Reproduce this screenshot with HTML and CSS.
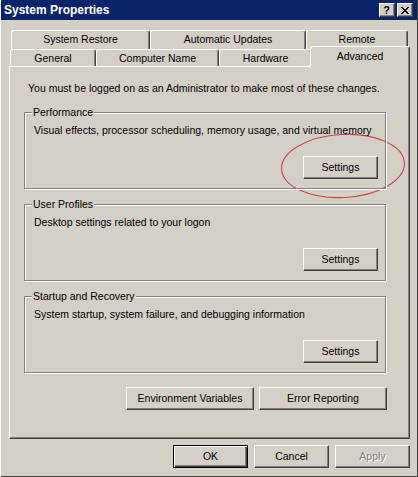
FILE: index.html
```html
<!DOCTYPE html>
<html>
<head>
<meta charset="utf-8">
<title>System Properties</title>
<link rel="stylesheet" href="styles.css">
</head>
<body>
<div class="window">
  <div class="titlebar">
    <span class="title">System Properties</span>
    <div class="caption-btns">
      <span class="cbtn help">?</span>
      <span class="cbtn close">
        <svg width="8" height="7" viewBox="0 0 8 7" shape-rendering="crispEdges">
          <path d="M0 0h2v1h-2zM6 0h2v1h-2zM1 1h2v1h-2zM5 1h2v1h-2zM2 2h4v1h-4zM3 3h2v1h-2zM2 4h4v1h-4zM1 5h2v1h-2zM5 5h2v1h-2zM0 6h2v1h-2zM6 6h2v1h-2z" fill="#000"/>
        </svg>
      </span>
    </div>
  </div>

  <div class="tabs">
    <div class="tabrow back">
      <div class="tab w-restore">System Restore</div>
      <div class="tab w-updates">Automatic Updates</div>
      <div class="tab w-remote">Remote</div>
    </div>
    <div class="tabrow front">
      <div class="tab w-general">General</div>
      <div class="tab w-compname">Computer Name</div>
      <div class="tab w-hardware">Hardware</div>
      <div class="tab w-advanced selected">Advanced</div>
    </div>
  </div>

  <div class="panel">
    <p class="intro">You must be logged on as an Administrator to make most of these changes.</p>

    <div class="group">
      <span class="legend">Performance</span>
      <p class="desc">Visual effects, processor scheduling, memory usage, and virtual memory</p>
      <button class="btn btn-std">Settings</button>
    </div>

    <div class="group">
      <span class="legend">User Profiles</span>
      <p class="desc">Desktop settings related to your logon</p>
      <button class="btn btn-std">Settings</button>
    </div>

    <div class="group">
      <span class="legend">Startup and Recovery</span>
      <p class="desc">System startup, system failure, and debugging information</p>
      <button class="btn btn-std">Settings</button>
    </div>

    <div class="panel-actions">
      <button class="btn btn-wide">Environment Variables</button>
      <button class="btn btn-wide">Error Reporting</button>
    </div>
  </div>

  <div class="dialog-actions">
    <button class="btn btn-std default">OK</button>
    <button class="btn btn-std">Cancel</button>
    <button class="btn btn-std disabled">Apply</button>
  </div>

  <svg class="annotation" width="130" height="70" viewBox="0 0 130 70">
    <ellipse cx="63" cy="34" rx="61.5" ry="31.5" transform="rotate(-3 63 34)" fill="none" stroke="#c8444c" stroke-width="1.1"/>
  </svg>
</div>
</body>
</html>
```

FILE: styles.css
```css
html, body {
  margin: 0;
  padding: 0;
  background: #d4d0c8;
}

body {
  font-family: "Liberation Sans", Arial, sans-serif;
  font-size: 10.5px;
  line-height: 13px;
  color: #000;
}

.window {
  position: relative;
  width: 418px;
  height: 477px;
  box-sizing: border-box;
  background: #d4d0c8;
  box-shadow: inset 1px 0 #ffffff, inset -1px -1px #404040;
  overflow: hidden;
  display: flex;
  flex-direction: column;
}

/* Title bar */
.titlebar {
  height: 20px;
  margin: 0 1px;
  background: #0a246a;
  display: flex;
  align-items: center;
  justify-content: space-between;
  padding: 0 4px 0 3px;
  flex: none;
}

.title {
  color: #fff;
  font-weight: bold;
  font-size: 12px;
}

.caption-btns {
  display: flex;
  gap: 2px;
}

.cbtn {
  box-sizing: border-box;
  width: 16px;
  height: 14px;
  background: #d4d0c8;
  border: 1px solid;
  border-color: #fff #404040 #404040 #fff;
  box-shadow: inset -1px -1px #808080;
  display: flex;
  align-items: center;
  justify-content: center;
}

.cbtn.help {
  font-weight: bold;
  font-size: 11px;
  line-height: 11px;
  padding-right: 1px;
}

.cbtn.close svg {
  display: block;
  margin-right: 1px;
}

/* Tabs */
.tabs {
  margin-top: 10px;
  height: 36px;
  display: flex;
  flex-direction: column;
  flex: none;
}

.tabrow {
  display: flex;
}

.tabrow.back {
  height: 19px;
  margin-left: 11px;
}

.tabrow.front {
  height: 17px;
  margin-left: 10px;
  align-items: flex-end;
  position: relative;
  z-index: 2;
}

.tab {
  box-sizing: border-box;
  height: 100%;
  border: 1px solid #fff;
  border-right-color: #404040;
  border-bottom: 0;
  border-radius: 3px 3px 0 0;
  box-shadow: inset -1px 0 #808080;
  background: #d4d0c8;
  text-align: center;
  padding-top: 2px;
  white-space: nowrap;
  flex: none;
}

.w-restore { width: 139px; }
.w-updates { width: 156px; }
.w-remote { width: 102px; }
.w-general { width: 86px; }
.w-compname { width: 123px; }
.w-hardware { width: 93px; }
.w-advanced { width: 100px; }

.tab.selected {
  height: 22px;
  margin-left: -2px;
  margin-bottom: -2px;
  padding-top: 3px;
}

/* Panel */
.panel {
  position: relative;
  z-index: 1;
  margin-left: 9px;
  width: 401px;
  height: 373px;
  box-sizing: border-box;
  border: 1px solid;
  border-color: #fff #404040 #404040 #fff;
  box-shadow: inset -1px -1px #808080;
  padding: 15px 0 0 14px;
  flex: none;
}

.intro {
  margin: 0;
  padding-left: 4px;
  white-space: nowrap;
}

.group {
  box-sizing: border-box;
  width: 362px;
  height: 77px;
  border: 1px solid #808080;
  box-shadow: inset 1px 1px #fff, 1px 1px #fff;
  display: flex;
  flex-direction: column;
  margin-top: 17px;
}

.group + .group {
  margin-top: 15px;
}

.legend {
  align-self: flex-start;
  margin: -7px 0 0 7px;
  padding: 0 1px;
  background: #d4d0c8;
  white-space: nowrap;
}

.desc {
  margin: 5px 0 0 9px;
  white-space: nowrap;
}

.group .btn {
  align-self: flex-end;
  margin: auto 7px 9px 0;
}

/* Buttons */
.btn {
  box-sizing: border-box;
  height: 23px;
  padding: 0;
  font: inherit;
  color: #000;
  background: #d4d0c8;
  border: 1px solid;
  border-color: #fff #404040 #404040 #fff;
  box-shadow: inset -1px -1px #808080;
  display: flex;
  align-items: center;
  justify-content: center;
  white-space: nowrap;
  flex: none;
}

.btn-std { width: 75px; }
.btn-wide { width: 128px; }

.btn.default {
  border: 1px solid #000;
  box-shadow: inset 1px 1px #fff, inset -1px -1px #404040, inset -2px -2px #808080;
}

.btn.disabled {
  color: #808080;
  text-shadow: 1px 1px 0 #fff;
}

.panel-actions {
  width: 363px;
  margin-top: 14px;
  display: flex;
  justify-content: flex-end;
  gap: 5px;
}

.dialog-actions {
  margin-top: 6px;
  padding-right: 8px;
  display: flex;
  justify-content: flex-end;
  gap: 6px;
  flex: none;
}

.annotation {
  position: absolute;
  left: 280px;
  top: 132px;
  overflow: visible;
}
```
